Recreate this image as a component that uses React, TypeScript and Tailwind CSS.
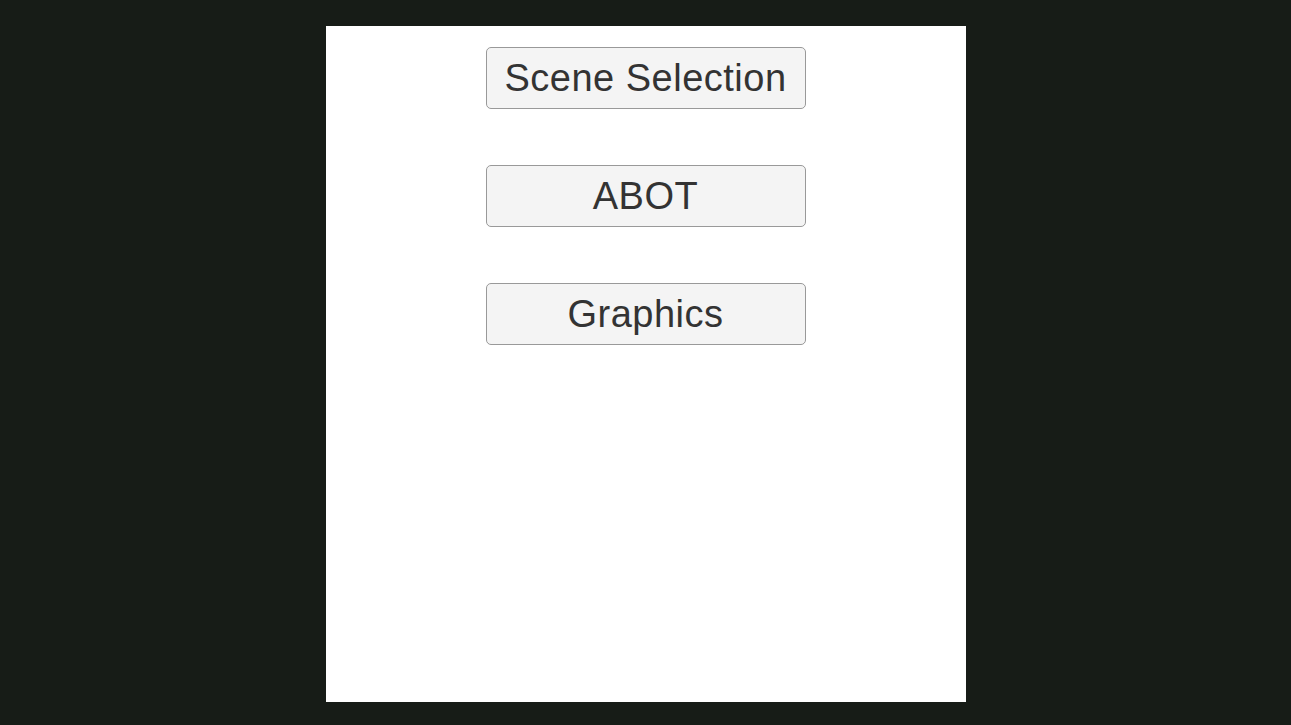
import React from "react";

const labels = ["Scene Selection", "ABOT", "Graphics"];

export default function App() {
  return (
    <div className="w-[1291px] h-[725px] bg-[#171c17] flex justify-center">
      <div className="mt-[26px] w-[640px] h-[676px] bg-white flex flex-col items-center pt-[21px] gap-[56px]">
        {labels.map((l) => (
          <button
            key={l}
            className="w-[320px] h-[62px] bg-[#f4f4f4] border border-[#999999] rounded-[5px] text-[#333333] text-[38px] leading-none tracking-[0.5px] flex items-center justify-center"
            style={{ fontFamily: '"Liberation Sans", Arial, sans-serif' }}
          >
            {l}
          </button>
        ))}
      </div>
    </div>
  );
}
